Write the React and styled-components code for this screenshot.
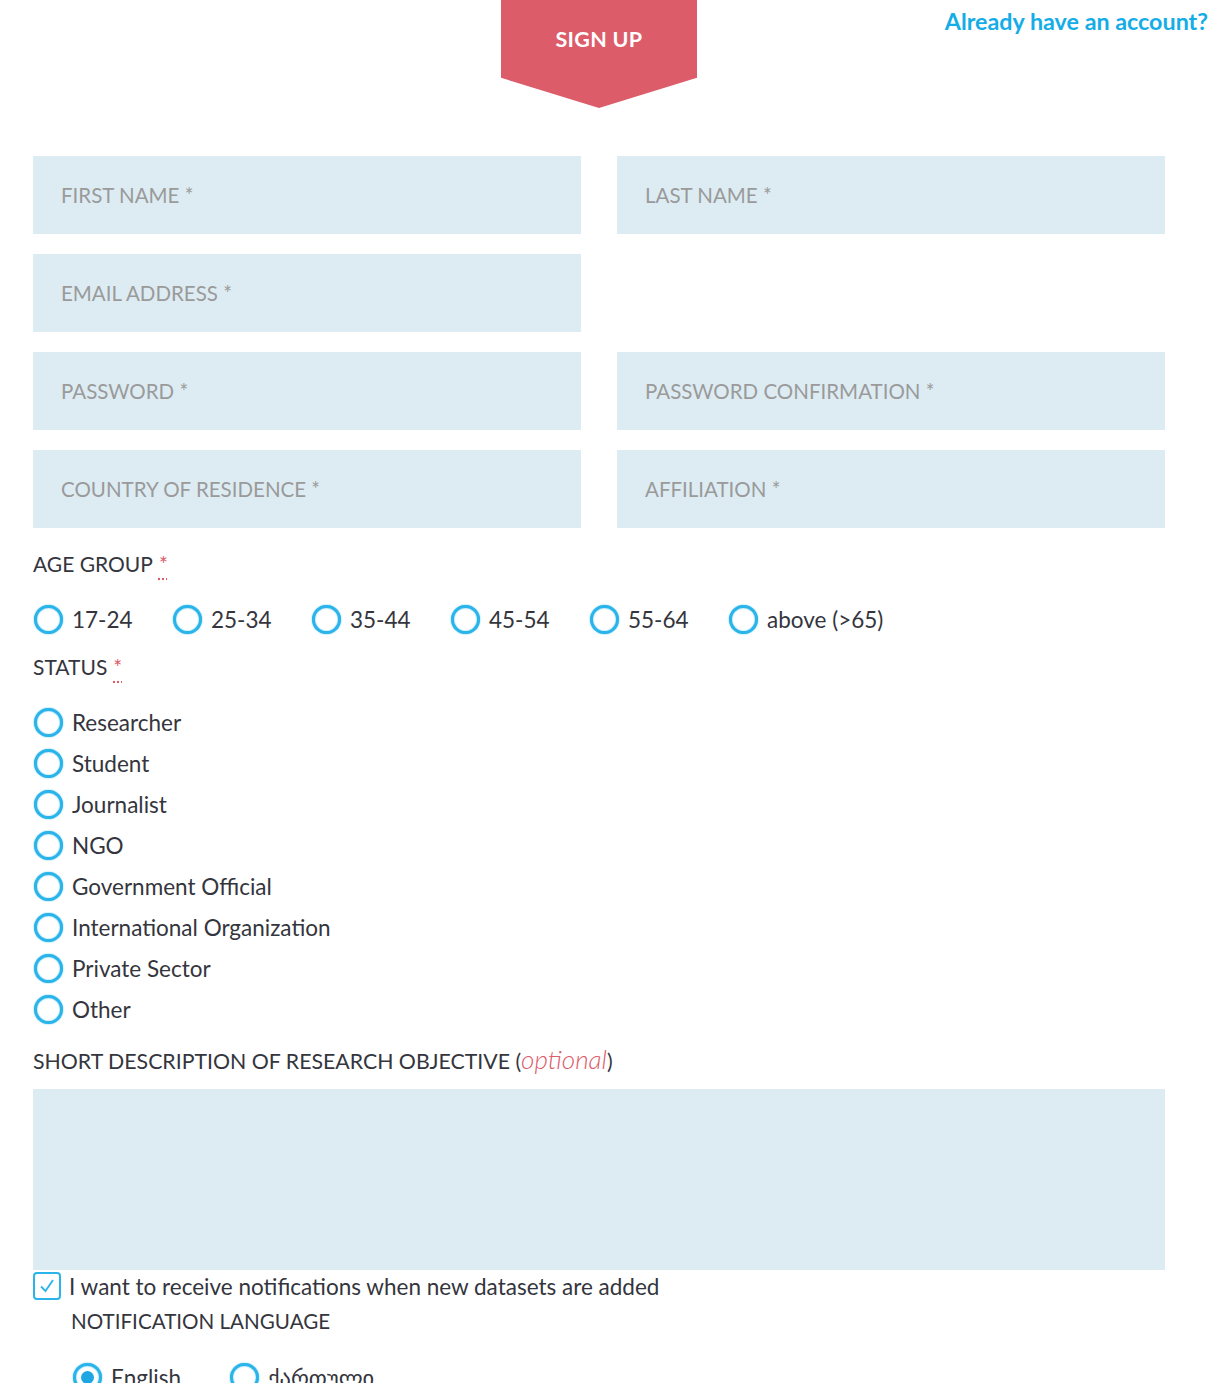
import React from "react";
import styled, { createGlobalStyle } from "styled-components";

const Global = createGlobalStyle`
  html, body { margin: 0; padding: 0; background: #fff; }
  body { font-family: Lato, "DejaVu Sans", sans-serif; color: #34353d; }
  * { box-sizing: border-box; }
`;

const Page = styled.div`
  width: 1227px;
  height: 1383px;
  overflow: hidden;
  padding-left: 33px;
`;

const Form = styled.div`
  width: 1132px;
  display: flex;
  flex-direction: column;
`;

const Header = styled.div`
  position: relative;
  display: flex;
  justify-content: center;
  height: 108px;
`;

const Badge = styled.div`
  width: 196px;
  height: 108px;
  background: #dc5c6a;
  clip-path: polygon(0 0, 100% 0, 100% 72%, 50% 100%, 0 72%);
  border-radius: 0 0 6px 6px;
  color: #fff;
  font-size: 21.5px;
  font-weight: 700;
  letter-spacing: 0.3px;
  display: flex;
  justify-content: center;
  padding-top: 26px;
`;

const SignIn = styled.a`
  position: absolute;
  right: -43px;
  top: 7px;
  color: #14ade6;
  font-size: 23.3px;
  font-weight: 700;
  text-decoration: none;
`;

const Fields = styled.div`
  margin-top: 48px;
  display: grid;
  grid-template-columns: 548px 548px;
  column-gap: 36px;
  row-gap: 20px;
`;

const Field = styled.div`
  height: 78px;
  background: #ddecf3;
  display: flex;
  align-items: center;
  padding-left: 28px;
  font-size: 20.5px;
  color: #9a9a9a;
  text-transform: uppercase;
  grid-column: ${(p) => p.$col || "auto"};
`;

const Label = styled.div`
  font-size: ${(p) => p.$fs || 21}px;
  line-height: 30px;
  margin-top: ${(p) => p.$mt}px;
  padding-left: ${(p) => p.$pl || 0}px;
  white-space: nowrap;
`;

const Req = styled.abbr`
  color: #dc5c6a;
  text-decoration: underline dotted;
  text-underline-offset: 6px;
  margin-left: 6px;
`;

const Optional = styled.span`
  color: #dc5c6a;
  font-style: italic;
  font-weight: 300;
  font-size: 26px;
`;

const RadioRow = styled.div`
  display: grid;
  grid-template-columns: repeat(${(p) => p.$count}, ${(p) => p.$pitch}px);
  margin-top: ${(p) => p.$mt}px;
  padding-left: ${(p) => p.$pl || 0}px;
`;

const RadioCol = styled.div`
  display: flex;
  flex-direction: column;
  gap: 11px;
  margin-top: 25px;
`;

const Option = styled.label`
  display: flex;
  align-items: center;
  gap: 9px;
  height: 30px;
  font-size: 22.5px;
  color: #34353d;
  white-space: nowrap;
`;

const Circle = styled.span`
  width: 29px;
  height: 29px;
  border-radius: 50%;
  border: 3px solid #2ab4ea;
  box-shadow: 0 0 1.5px #2ab4ea, inset 0 0 1.5px #2ab4ea;
  background: #fff;
  display: flex;
  align-items: center;
  justify-content: center;
  flex: none;
  margin-left: 1px;
  &::after {
    content: "";
    width: 13px;
    height: 13px;
    border-radius: 50%;
    background: #1ea6e3;
    display: ${(p) => (p.$checked ? "block" : "none")};
  }
`;

const TextArea = styled.div`
  margin-top: 13px;
  height: 181px;
  background: #ddecf3;
`;

const CheckRow = styled.label`
  display: flex;
  align-items: center;
  gap: 8px;
  height: 30px;
  margin-top: 1px;
  font-size: 22.5px;
`;

const Box = styled.span`
  width: 28px;
  height: 28px;
  border: 2px solid #2ab4ea;
  border-radius: 4px;
  display: flex;
  align-items: center;
  justify-content: center;
  flex: none;
`;

const ages = ["17-24", "25-34", "35-44", "45-54", "55-64", "above (>65)"];
const statuses = [
  "Researcher",
  "Student",
  "Journalist",
  "NGO",
  "Government Official",
  "International Organization",
  "Private Sector",
  "Other",
];

export default function App() {
  return (
    <Page>
      <Global />
      <Form>
        <Header>
          <Badge>SIGN UP</Badge>
          <SignIn href="#">Already have an account?</SignIn>
        </Header>
        <Fields>
          <Field>First name *</Field>
          <Field>Last name *</Field>
          <Field $col="1">Email address *</Field>
          <Field $col="1">Password *</Field>
          <Field>Password confirmation *</Field>
          <Field>Country of residence *</Field>
          <Field>Affiliation *</Field>
        </Fields>
        <Label $mt={21}>
          AGE GROUP<Req title="required">*</Req>
        </Label>
        <RadioRow $mt={25} $count={6} $pitch={139}>
          {ages.map((a) => (
            <Option key={a}>
              <Circle />
              {a}
            </Option>
          ))}
        </RadioRow>
        <Label $mt={18}>
          STATUS<Req title="required">*</Req>
        </Label>
        <RadioCol>
          {statuses.map((s) => (
            <Option key={s}>
              <Circle />
              {s}
            </Option>
          ))}
        </RadioCol>
        <Label $mt={20} $fs={21.3}>
          SHORT DESCRIPTION OF RESEARCH OBJECTIVE (<Optional>optional</Optional>)
        </Label>
        <TextArea />
        <CheckRow>
          <Box>
            <svg width="18" height="18" viewBox="0 0 18 18">
              <path d="M3 9.5 L7.5 14 L15 3" fill="none" stroke="#2ab4ea" strokeWidth="1.8" />
            </svg>
          </Box>
          I want to receive notifications when new datasets are added
        </CheckRow>
        <Label $mt={5} $pl={38} $fs={20.6}>
          NOTIFICATION LANGUAGE
        </Label>
        <RadioRow $mt={26} $count={2} $pitch={157} $pl={39}>
          <Option>
            <Circle $checked />
            English
          </Option>
          <Option>
            <Circle />
            ქართული
          </Option>
        </RadioRow>
      </Form>
    </Page>
  );
}
